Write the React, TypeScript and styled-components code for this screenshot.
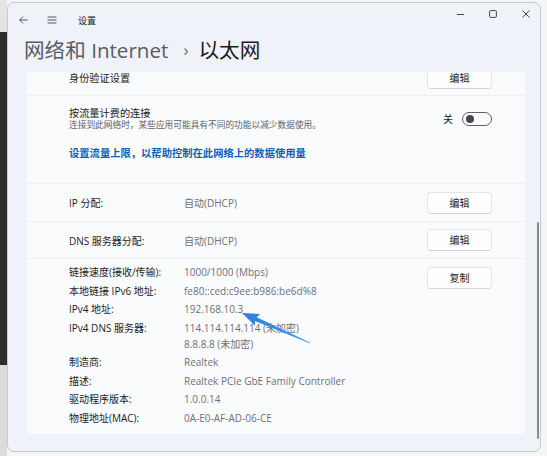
import styled, { createGlobalStyle } from "styled-components";

const GlobalStyle = createGlobalStyle`
  html, body {
    margin: 0;
    padding: 0;
  }
  body {
    font-family: "Open Sans", "Noto Sans CJK SC", sans-serif;
    color: #1b1b1b;
  }
`;

const details = [
  { label: "链接速度(接收/传输):", value: ["1000/1000 (Mbps)"] },
  { label: "本地链接 IPv6 地址:", value: ["fe80::ced:c9ee:b986:be6d%8"] },
  { label: "IPv4 地址:", value: ["192.168.10.3"] },
  { label: "IPv4 DNS 服务器:", value: ["114.114.114.114 (未加密)", "8.8.8.8 (未加密)"] },
  { label: "制造商:", value: ["Realtek"] },
  { label: "描述:", value: ["Realtek PCIe GbE Family Controller"] },
  { label: "驱动程序版本:", value: ["1.0.0.14"] },
  { label: "物理地址(MAC):", value: ["0A-E0-AF-AD-06-CE"] },
];

const App = () => {
  return (
    <Desktop>
      <GlobalStyle />
      <Window>
        <TitleBar>
          <NavGroup>
            <svg width="9" height="8" viewBox="0 0 9 8">
              <path d="M4 0.6 L0.7 4 L4 7.4 M0.7 4 H8.6" fill="none" stroke="#444" strokeWidth="0.9" />
            </svg>
            <svg width="10" height="8" viewBox="0 0 10 8">
              <path d="M0.5 1 H9.5 M0.5 4 H9.5 M0.5 7 H9.5" fill="none" stroke="#444" strokeWidth="0.9" />
            </svg>
            <AppName>设置</AppName>
          </NavGroup>
          <Controls>
            <svg width="7" height="7" viewBox="0 0 7 7">
              <path d="M0 3.5 H7" stroke="#333" strokeWidth="0.9" />
            </svg>
            <svg width="8" height="8" viewBox="0 0 8 8">
              <rect x="0.6" y="0.6" width="6.8" height="6.8" rx="1" fill="none" stroke="#333" strokeWidth="0.9" />
            </svg>
            <svg width="8" height="8" viewBox="0 0 8 8">
              <path d="M0.5 0.5 L7.5 7.5 M7.5 0.5 L0.5 7.5" stroke="#333" strokeWidth="0.9" />
            </svg>
          </Controls>
        </TitleBar>

        <Heading>
          <Crumb>网络和 Internet</Crumb>
          <Chevron>›</Chevron>
          <Current>以太网</Current>
        </Heading>

        <Viewport>
          <Card>
            <Row $height={33}>
              <Label>身份验证设置</Label>
              <Button $top={-2}>编辑</Button>
            </Row>

            <MeteredRow>
              <MeteredHead>
                <div>
                  <Label>按流量计费的连接</Label>
                  <Hint>连接到此网络时，某些应用可能具有不同的功能以减少数据使用。</Hint>
                </div>
                <ToggleGroup>
                  <span>关</span>
                  <Toggle>
                    <Knob />
                  </Toggle>
                </ToggleGroup>
              </MeteredHead>
              <Link>设置流量上限，以帮助控制在此网络上的数据使用量</Link>
            </MeteredRow>

            <Row $height={37}>
              <Key>IP 分配:</Key>
              <Value>自动(DHCP)</Value>
              <Button>编辑</Button>
            </Row>

            <Row $height={36}>
              <Key>DNS 服务器分配:</Key>
              <Value>自动(DHCP)</Value>
              <Button>编辑</Button>
            </Row>

            <DetailsRow>
              <DetailGrid>
                {details.map((item) => (
                  <DetailItem key={item.label}>
                    <Key>{item.label}</Key>
                    <Value>
                      {item.value.map((line) => (
                        <div key={line}>{line}</div>
                      ))}
                    </Value>
                  </DetailItem>
                ))}
              </DetailGrid>
              <Button $top={3}>复制</Button>
            </DetailsRow>
          </Card>
        </Viewport>
        <ScrollThumb />
      </Window>

      {/* annotation arrow drawn over the screenshot */}
      <Arrow width="547" height="456" viewBox="0 0 547 456">
        <defs>
          <linearGradient id="arrowFill" x1="242" y1="313" x2="310" y2="343" gradientUnits="userSpaceOnUse">
            <stop offset="0" stopColor="#2b7fd8" />
            <stop offset="0.7" stopColor="#3f95e6" />
            <stop offset="1" stopColor="#6db6f2" />
          </linearGradient>
        </defs>
        <polygon
          points="242,313 260.2,314 256.6,317.3 310.2,342.5 309.8,343.5 255,320.9 255,325.8"
          fill="url(#arrowFill)"
        />
      </Arrow>
    </Desktop>
  );
};

const Desktop = styled.div`
  position: relative;
  width: 547px;
  height: 456px;
  box-sizing: border-box;
  padding: 2px 6px 4px 7px;
  overflow: hidden;
  background:
    linear-gradient(to bottom, #e4e4e4 0 32px, #2d2d2d 32px 365px, #dcdcdc 365px) left top / 7px 100% no-repeat,
    #f5f5f5;
`;

const Window = styled.div`
  position: relative;
  width: 534px;
  height: 450px;
  box-sizing: border-box;
  border: 1px solid #c6c9cf;
  border-radius: 7px;
  background: #eff2f8;
  display: flex;
  flex-direction: column;
  overflow: hidden;
`;

const TitleBar = styled.div`
  display: flex;
  align-items: flex-start;
  height: 34px;
  padding-left: 11px;
  flex-shrink: 0;
`;

const NavGroup = styled.div`
  display: flex;
  align-items: center;
  height: 34px;
  gap: 19px;

  svg:nth-child(2) {
    margin-right: 2px;
  }
`;

const AppName = styled.span`
  font-size: 9px;
  color: #1b1b1b;
`;

const Controls = styled.div`
  margin-left: auto;
  display: flex;
  align-items: center;
  height: 22px;
  gap: 25px;
  padding-right: 10px;
`;

const Heading = styled.div`
  display: flex;
  align-items: center;
  height: 26px;
  padding-left: 16px;
  margin-bottom: 9px;
  font-size: 20.6px;
  line-height: 26px;
  flex-shrink: 0;
`;

const Crumb = styled.span`
  color: #585c63;
`;

const Chevron = styled.span`
  color: #666;
  font-size: 17px;
  margin: 0 10px 0 15px;
`;

const Current = styled.span`
  color: #1a1a1a;
`;

const Viewport = styled.div`
  flex: 1;
  overflow: hidden;
  padding: 0 15px 0 19px;
`;

const Card = styled.div`
  margin-top: -10px;
  background: #fafbfd;
  border-radius: 0 0 5px 5px;
`;

const Row = styled.div<{ $height: number }>`
  display: flex;
  align-items: center;
  height: ${({ $height }) => $height}px;
  padding: 0 33px 0 42px;
  border-bottom: 1px solid #eceef3;
`;

const Label = styled.div`
  font-size: 10.2px;
  line-height: 13px;
  color: #1b1b1b;
`;

const Hint = styled.div`
  font-size: 8.7px;
  line-height: 11px;
  color: #606368;
`;

const Key = styled.div`
  width: 115px;
  flex-shrink: 0;
  font-size: 10px;
  color: #1b1b1b;
`;

const Value = styled.div`
  font-size: 10px;
  color: #6e7075;
`;

const Button = styled.button<{ $top?: number }>`
  margin-left: auto;
  margin-top: ${({ $top }) => $top ?? 0}px;
  width: 65px;
  height: 22px;
  flex-shrink: 0;
  box-sizing: border-box;
  background: #fefefe;
  border: 1px solid #e4e5e9;
  border-bottom-color: #d2d3d7;
  border-radius: 4px;
  font-family: inherit;
  font-size: 10px;
  line-height: 10px;
  color: #1b1b1b;
  padding: 0;
`;

const MeteredRow = styled.div`
  padding: 10.5px 33px 23px 42px;
  border-bottom: 1px solid #eceef3;
`;

const MeteredHead = styled.div`
  display: flex;
  align-items: center;
`;

const ToggleGroup = styled.div`
  margin-left: auto;
  display: flex;
  align-items: center;
  gap: 9px;
  font-size: 10px;
  color: #1b1b1b;
`;

const Toggle = styled.div`
  width: 30px;
  height: 14px;
  box-sizing: border-box;
  border: 1px solid #5c5e62;
  border-radius: 7px;
  display: flex;
  align-items: center;
  padding-left: 3px;
`;

const Knob = styled.div`
  width: 8px;
  height: 8px;
  border-radius: 50%;
  background: #46484c;
`;

const Link = styled.div`
  margin-top: 15.5px;
  font-size: 10.3px;
  line-height: 14px;
  font-weight: 600;
  color: #0f5fb6;
`;

const DetailsRow = styled.div`
  display: flex;
  align-items: flex-start;
  padding: 5px 33px 8px 42px;
`;

const DetailGrid = styled.div`
  display: flex;
  flex-direction: column;
  gap: 2.5px;
  line-height: 16px;
`;

const DetailItem = styled.div`
  display: flex;
`;

const ScrollThumb = styled.div`
  position: absolute;
  right: 1px;
  top: 219px;
  bottom: 12px;
  width: 2px;
  border-radius: 1px;
  background: #8c8c8c;
`;

const Arrow = styled.svg`
  position: absolute;
  left: 0;
  top: 0;
  pointer-events: none;
`;

export default App;
